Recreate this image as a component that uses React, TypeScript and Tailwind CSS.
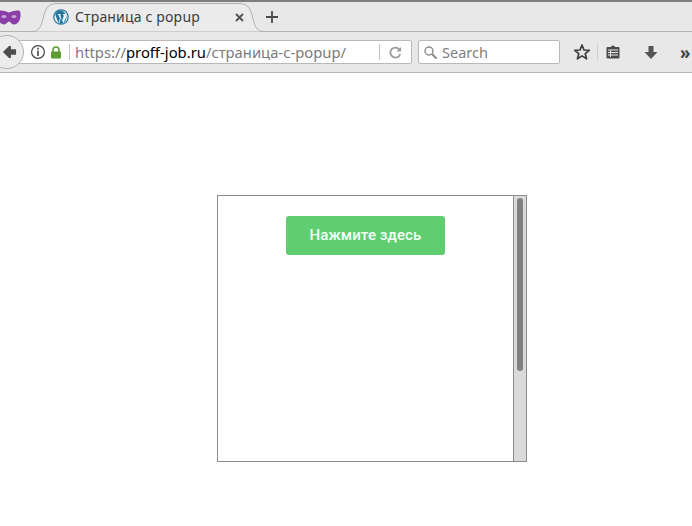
import React from "react";

const WpLogo = () => (
  <svg width="16" height="16" viewBox="0 0 16 16" className="shrink-0">
    <circle cx="8" cy="8" r="7.8" fill="#21759b" />
    <circle cx="8" cy="8" r="6.6" fill="#eaf3f7" />
    <path d="M2.2 5.4 L5.4 14 L6.9 9.6 L5.5 5.7 L4.6 5.6 L4.6 5 L8 5 L8 5.6 L7.1 5.7 L9.2 11.6 L10.4 8 C10.9 6.4 10.6 5.7 9.9 5.6 L9.9 5 L12.6 5 C11 2.4 8.6 1.4 6.4 1.6 C4.6 2 3 3.4 2.2 5.4 Z" fill="#21759b" />
    <path d="M13.2 5.6 C13.6 7.6 13.2 9.6 10.2 14 L8 8.8 L6.2 14.4 C7.6 14.8 9 14.8 10.2 14 C13 12.6 14.4 8.6 13.2 5.6 Z" fill="#21759b" />
  </svg>
);

const Mask = () => (
  <svg width="24" height="17" viewBox="0 0 24 17" className="shrink-0">
    <path d="M1 2 C4 1 8 2 12 3.5 C16 2 20 1 23 2 C24.5 7 23 15 17 15.5 C14.5 15.5 13.5 12.5 12 12.5 C10.5 12.5 9.5 15.5 7 15.5 C1 15 -0.5 7 1 2 Z" fill="#8a3fa8" />
    <ellipse cx="7" cy="7.5" rx="2.6" ry="1.6" fill="#c9a6d8" />
    <ellipse cx="17" cy="7.5" rx="2.6" ry="1.6" fill="#c9a6d8" />
  </svg>
);

const BrowserChrome = () => (
  <div className="h-[73px] bg-[#e8e8e8] border-b border-[#b5b5b5] font-['Noto_Sans',sans-serif] overflow-hidden">
    <div className="h-[2px] bg-[#7d7d7d]" />
    {/* tab strip */}
    <div className="h-[30px] flex items-end border-b border-[#b3b3b3]">
      <div className="w-[32px] h-full flex items-center">
        <div className="-ml-[3px] mt-[1px]">
          <Mask />
        </div>
      </div>
      <div className="relative -mb-[1px] w-[232px] h-[30px] flex items-center pl-[21px] pr-[20px] gap-[5px]">
        <svg width="232" height="30" viewBox="0 0 232 30" className="absolute left-0 top-0">
          <path d="M0 29.5 C7 29.5 9 25 11 17 C13 8 15 1.5 25 1.5 L207 1.5 C217 1.5 219 8 221 17 C223 25 225 29.5 232 29.5" fill="#ebebeb" stroke="#b0b0b0" />
        </svg>
        <div className="relative flex items-center gap-[6px] flex-1 min-w-0">
          <WpLogo />
          <span className="text-[14px] tracking-[0.15px] text-[#3c3c3c] leading-none">Страница с popup</span>
        </div>
        <svg width="9" height="9" viewBox="0 0 9 9" className="relative shrink-0">
          <path d="M1 1 L8 8 M8 1 L1 8" stroke="#555" strokeWidth="2" />
        </svg>
      </div>
      <div className="h-full flex items-center ml-[1px]">
        <svg width="14" height="14" viewBox="0 0 14 14">
          <path d="M7 1 V13 M1 7 H13" stroke="#4a4a4a" strokeWidth="1.8" />
        </svg>
      </div>
    </div>
    {/* nav bar */}
    <div className="h-[40px] flex items-center">
      <div className="relative z-10 -ml-[10px] w-[34px] h-[34px] rounded-full bg-[#ececec] border border-[#b1b1b1] flex items-center justify-center shrink-0">
        <svg width="15" height="14" viewBox="0 0 16 14" className="ml-[5px]">
          <path d="M7.5 0.5 L1 7 L7.5 13.5 L9.5 13.5 L9.5 10 L15 10 L15 4 L9.5 4 L9.5 0.5 Z" fill="#4d4d4d" />
        </svg>
      </div>
      <div className="-ml-[10px] w-[398px] h-[24px] bg-white border border-[#b9b9b9] rounded-r-[2px] flex items-center pl-[15px] shrink-0">
        <svg width="16" height="16" viewBox="0 0 16 16" className="shrink-0">
          <circle cx="8" cy="8" r="6.4" fill="none" stroke="#444" strokeWidth="1.2" />
          <rect x="7.2" y="3.8" width="1.6" height="1.7" fill="#444" />
          <rect x="7.2" y="6.6" width="1.6" height="5.4" fill="#444" />
        </svg>
        <svg width="12" height="13" viewBox="0 0 12 13" className="ml-[4px] shrink-0">
          <path d="M3 6 V4 a3 3 0 0 1 6 0 V6" fill="none" stroke="#5a9e2f" strokeWidth="1.6" />
          <rect x="1" y="5.5" width="10" height="7" rx="1" fill="#5a9e2f" />
        </svg>
        <div className="w-px h-[16px] bg-[#c4c4c4] ml-[7px] mr-[5px] shrink-0" />
        <span className="text-[14.8px] leading-none text-[#7b7b7b] whitespace-nowrap flex-1">
          https://<span className="text-black">proff-job.ru</span>/страница-с-popup/
        </span>
        <div className="w-px h-[16px] bg-[#c4c4c4] shrink-0" />
        <svg width="13" height="13" viewBox="0 0 13 13" className="mx-[9px] shrink-0">
          <path d="M10.8 4.2 A5 5 0 1 0 11.2 8" fill="none" stroke="#9a9a9a" strokeWidth="1.8" />
          <path d="M7.6 5.4 H12 V1 Z" fill="#9a9a9a" />
        </svg>
      </div>
      <div className="ml-[6px] w-[142px] h-[24px] bg-white border border-[#b9b9b9] rounded-[2px] flex items-center pl-[4px] gap-[4px] shrink-0">
        <svg width="15" height="15" viewBox="0 0 15 15">
          <circle cx="6" cy="6" r="4" fill="none" stroke="#8a8a8a" strokeWidth="1.4" />
          <path d="M9 9 L13.5 13.5" stroke="#8a8a8a" strokeWidth="2" />
        </svg>
        <span className="text-[14.5px] leading-none text-[#7f7f7f]">Search</span>
      </div>
      <svg width="18" height="18" viewBox="0 0 18 18" className="ml-[13px] shrink-0">
        <path d="M9 2 L11 7 L16.3 7.3 L12.2 10.6 L13.6 15.8 L9 12.9 L4.4 15.8 L5.8 10.6 L1.7 7.3 L7 7 Z" fill="none" stroke="#3f3f3f" strokeWidth="1.7" strokeLinejoin="round" />
      </svg>
      <div className="ml-[6px] w-px h-[18px] bg-[#d0d0d0] shrink-0" />
      <svg width="14" height="14" viewBox="0 0 14 14" className="ml-[8px] shrink-0">
        <path d="M5 2 a2 1.5 0 0 1 4 0 H12.5 a1 1 0 0 1 1 1 V12.5 a1 1 0 0 1 -1 1 H1.5 a1 1 0 0 1 -1 -1 V3 a1 1 0 0 1 1 -1 Z" fill="#4a4a4a" />
        <path d="M2 5 H12 M2 7.5 H12 M2 10 H12 M4.5 5 V12" stroke="#e8e8e8" strokeWidth="1" />
      </svg>
      <svg width="14" height="15" viewBox="0 0 14 15" className="ml-[24px] shrink-0">
        <path d="M4.5 1 H9.5 V7 H13.5 L7 14 L0.5 7 H4.5 Z" fill="#555" />
      </svg>
      <span className="ml-[22px] text-[17px] font-bold text-[#444] leading-none">»</span>
    </div>
  </div>
);

export default function App() {
  return (
    <div className="w-[692px] h-[526px] bg-white overflow-hidden">
      <BrowserChrome />
      {/* framed page */}
      <div className="pt-[122px] pl-[217px]">
        <div className="w-[310px] h-[267px] border border-[#8c8c8c] bg-white flex">
          <div className="flex-1 flex justify-center items-start pt-[20px]">
            <button className="w-[159px] h-[39px] bg-[#5fce70] rounded-[3px] text-[#f6fff7] text-[15px] font-medium font-['Roboto',sans-serif] tracking-[0.1px]">
              Нажмите здесь
            </button>
          </div>
          <div className="w-[13px] bg-[#dadada] border-l border-[#8c8c8c] pt-[2px] pl-[3px]">
            <div className="w-[6px] h-[173px] bg-[#808080] rounded-[3px]" />
          </div>
        </div>
      </div>
    </div>
  );
}
